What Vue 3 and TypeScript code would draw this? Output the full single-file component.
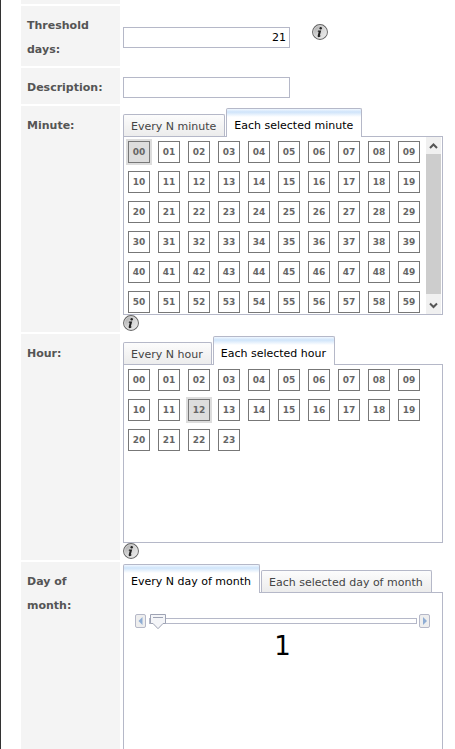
<script setup lang="ts">
import { computed, ref } from 'vue'

interface PickerField {
  id: string
  label: string
  everyTab: string
  eachTab: string
  count: number
  scrolls: boolean
}

const fields: PickerField[] = [
  { id: 'minute', label: 'Minute:', everyTab: 'Every N minute', eachTab: 'Each selected minute', count: 60, scrolls: true },
  { id: 'hour', label: 'Hour:', everyTab: 'Every N hour', eachTab: 'Each selected hour', count: 24, scrolls: false },
]

const threshold = ref('21')
const description = ref('')
const selected = ref<Record<string, number[]>>({ minute: [0], hour: [12] })
const day = ref(1)

const handleLeft = computed(() => `${((day.value - 1) / 30) * 100}%`)

function values(count: number): number[] {
  return Array.from({ length: count }, (_, i) => i)
}

function pad(n: number): string {
  return String(n).padStart(2, '0')
}

function isOn(id: string, n: number): boolean {
  return selected.value[id].includes(n)
}

function toggle(id: string, n: number): void {
  const list = selected.value[id]
  selected.value[id] = list.includes(n) ? list.filter((v) => v !== n) : [...list, n]
}

function step(delta: number): void {
  day.value = Math.min(31, Math.max(1, day.value + delta))
}
</script>

<template>
  <main class="page">
    <svg class="defs" width="0" height="0" aria-hidden="true">
      <defs>
        <linearGradient id="ball" x1="0" y1="0" x2="1" y2="1">
          <stop offset="0" stop-color="#9a9a9a" />
          <stop offset="0.5" stop-color="#d6d6d6" />
          <stop offset="1" stop-color="#f2f2f2" />
        </linearGradient>
        <symbol id="info" viewBox="0 0 16 16">
          <circle cx="8" cy="8" r="7.4" fill="url(#ball)" stroke="#686868" stroke-width="1.1" />
          <circle cx="8" cy="8" r="6.4" fill="none" stroke="#e4e4e4" stroke-width="0.7" />
          <circle cx="8.7" cy="4.2" r="1.2" fill="#222" />
          <path d="M6 6.6h3.2L7.9 11.2q-.2 .8 .5 .5l.8-.5q-1.100 2-2.600 2q-1.300 0-.9-1.600L6.700 7.700H5.700Z" fill="#222" />
        </symbol>
      </defs>
    </svg>

    <div class="row stub"><div class="label"></div></div>

    <div class="row">
      <label class="label" for="threshold">Threshold days:</label>
      <div class="field inline">
        <input id="threshold" v-model="threshold" class="text number" type="text" />
        <svg class="info" role="img" aria-label="Info"><use href="#info" /></svg>
      </div>
    </div>

    <div class="row">
      <label class="label" for="description">Description:</label>
      <div class="field inline">
        <input id="description" v-model="description" class="text" type="text" />
      </div>
    </div>

    <div v-for="f in fields" :key="f.id" class="row">
      <div :id="f.id + '-label'" class="label">{{ f.label }}</div>
      <div class="field" role="group" :aria-labelledby="f.id + '-label'">
        <div class="tabs" role="tablist">
          <button class="tab" type="button" role="tab" aria-selected="false">{{ f.everyTab }}</button>
          <button class="tab active" type="button" role="tab" aria-selected="true">{{ f.eachTab }}</button>
        </div>
        <div class="panel">
          <div class="cells">
            <button
              v-for="n in values(f.count)"
              :key="n"
              type="button"
              class="cell"
              :class="{ on: isOn(f.id, n) }"
              :aria-pressed="isOn(f.id, n)"
              @click="toggle(f.id, n)"
            >{{ pad(n) }}</button>
          </div>
          <div v-if="f.scrolls" class="scrollbar" aria-hidden="true">
            <svg class="arrow" viewBox="0 0 15 17"><path d="M4 11 7.500 7.500 11 11" /></svg>
            <div class="thumb"></div>
            <svg class="arrow" viewBox="0 0 15 17"><path d="M4 8 7.500 11.500 11 8" /></svg>
          </div>
        </div>
        <svg class="info" role="img" aria-label="Info"><use href="#info" /></svg>
      </div>
    </div>

    <div class="row">
      <label class="label" for="day">Day of month:</label>
      <div class="field">
        <div class="tabs" role="tablist">
          <button class="tab active" type="button" role="tab" aria-selected="true">Every N day of month</button>
          <button class="tab" type="button" role="tab" aria-selected="false">Each selected day of month</button>
        </div>
        <div class="panel stacked">
          <div class="slider">
            <button class="step" type="button" aria-label="Decrease" @click="step(-1)">
              <svg viewBox="0 0 9 12"><path d="M6.500 2v8L2.500 6Z" /></svg>
            </button>
            <div class="rail">
              <div class="line"></div>
              <div class="travel">
                <svg class="handle" :style="{ left: handleLeft }" viewBox="0 0 16 16" aria-hidden="true">
                  <path d="M.5 .5h15v9h-2.500L8 14.700 3 9.500H.5Z" fill="#f4f5f8" stroke="#9ea3b4" />
                  <path d="M3 3.500h10" stroke="#9ea3b4" />
                </svg>
              </div>
              <input id="day" v-model.number="day" class="range" type="range" min="1" max="31" />
            </div>
            <button class="step" type="button" aria-label="Increase" @click="step(1)">
              <svg viewBox="0 0 9 12"><path d="M3 2v8L7 6Z" /></svg>
            </button>
          </div>
          <output class="value" for="day">{{ day }}</output>
        </div>
      </div>
    </div>
  </main>
</template>

<style>
body {
  margin: 0;
  background: #fff;
}
</style>

<style scoped>
* {
  box-sizing: border-box;
}

.page {
  display: flex;
  flex-direction: column;
  gap: 2px;
  height: 100vh;
  overflow: hidden;
  padding: 0 12px 0 20px;
  border-left: 1px solid #333;
  font-family: Verdana, "DejaVu Sans", sans-serif;
  font-size: 11px;
  color: #000;
}

.defs {
  position: absolute;
}

.row {
  display: grid;
  grid-template-columns: 99px minmax(0, 1fr);
  column-gap: 3px;
  flex: none;
}

.label {
  padding: 8px 6px 4px;
  background: #f4f4f4;
  color: #555;
  font-weight: bold;
  line-height: 24px;
}

.stub .label {
  height: 4px;
  padding: 0;
}

.field {
  padding: 2px 0 1px;
}

.inline {
  display: flex;
  align-items: center;
  gap: 22px;
  padding-top: 4px;
}

.text {
  width: 167px;
  height: 21px;
  padding: 1px 3px;
  border: 1px solid #b5b8c8;
  border-radius: 0;
  background: #fff;
  color: #000;
  font: inherit;
}

.number {
  text-align: right;
}

.info {
  display: block;
  width: 16px;
  height: 16px;
}

.inline .info {
  margin-bottom: 12px;
}

.tabs {
  display: flex;
  align-items: flex-end;
  gap: 1px;
  height: 28px;
}

.tab {
  height: 22px;
  padding: 2px 8px 0 7px;
  border: 1px solid #b5b8c8;
  border-bottom: 0;
  border-radius: 2px 2px 0 0;
  background: linear-gradient(#fcfcfc, #ececec);
  color: #444;
  font: inherit;
  line-height: 19px;
  white-space: nowrap;
}

.tab.active {
  position: relative;
  z-index: 1;
  height: 29px;
  margin-bottom: -1px;
  padding-top: 5px;
  background: linear-gradient(#f0f7ff, #cfe4fa 3px, #fff 8px);
  color: #000;
}

.panel {
  display: flex;
  justify-content: space-between;
  height: 179px;
  overflow: hidden;
  border: 1px solid #b5b8c8;
  background: #fff;
}

.stacked {
  flex-direction: column;
  justify-content: flex-start;
  padding: 21px 12px 0 11px;
}

.cells {
  display: grid;
  grid-template-columns: repeat(10, 22px);
  grid-auto-rows: 22px;
  align-content: start;
  gap: 8px;
  padding: 4px;
}

.cell {
  padding: 0;
  border: 1px solid #777;
  background: #fff;
  color: #666;
  font: bold 9px/20px Verdana, "DejaVu Sans", sans-serif;
  text-align: center;
}

.cell.on {
  background: #ddd;
  box-shadow: 0 0 0 2px #ddd;
}

.scrollbar {
  display: flex;
  flex-direction: column;
  width: 16px;
  padding-right: 1px;
}

.arrow {
  width: 15px;
  height: 17px;
  background: #f0f0f0;
  fill: none;
  stroke: #555;
  stroke-width: 2;
}

.thumb {
  height: 140px;
  background: #cdcdcd;
}

.arrow:last-child {
  flex: 1;
}

.slider {
  display: flex;
  align-items: center;
  gap: 2px;
}

.step {
  display: block;
  width: 11px;
  height: 14px;
  padding: 0;
  border: 1px solid #b5b8c8;
  border-radius: 2px;
  background: #eee;
}

.step svg {
  display: block;
  width: 9px;
  height: 12px;
  fill: #8fadd4;
}

.rail {
  position: relative;
  display: flex;
  flex: 1;
  align-items: center;
  height: 14px;
  margin-left: 1px;
}

.line {
  flex: 1;
  height: 6px;
  border: 1px solid #b5b8c8;
  background: #fff;
}

.travel {
  position: absolute;
  inset: 0 17px 0 1px;
}

.handle {
  position: absolute;
  top: 0;
  width: 16px;
  height: 16px;
}

.range {
  position: absolute;
  inset: 0;
  width: 100%;
  height: 100%;
  margin: 0;
  opacity: 0;
}

.value {
  font-size: 26px;
  line-height: 36px;
  text-align: center;
}
</style>
